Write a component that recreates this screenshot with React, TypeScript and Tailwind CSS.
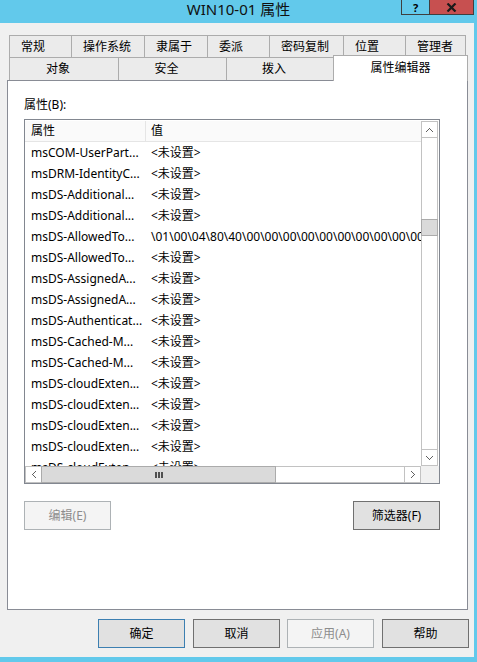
import React from "react";

const font = "font-['Noto_Sans','Noto_Sans_CJK_SC',sans-serif]";

const row1: [string, string][] = [
  ["常规", "w-[63px]"],
  ["操作系统", "w-[74px] -ml-px"],
  ["隶属于", "w-[64px] -ml-px"],
  ["委派", "w-[63px] -ml-px"],
  ["密码复制", "w-[75px] -ml-px"],
  ["位置", "w-[63px] -ml-px"],
  ["管理者", "w-[61px] -ml-px"],
];

const row2: [string, string][] = [
  ["对象", "w-[110px]"],
  ["安全", "w-[109px] -ml-px"],
  ["拨入", "w-[108px] -ml-px"],
];

const NS = "<未设置>";
const HEX = "\\01\\00\\04\\80\\40\\00\\00\\00\\00\\00\\00\\00\\00\\00\\00\\00";

const rows: [string, string][] = [
  ["msCOM-UserPart...", NS],
  ["msDRM-IdentityC...", NS],
  ["msDS-Additional...", NS],
  ["msDS-Additional...", NS],
  ["msDS-AllowedTo...", HEX],
  ["msDS-AllowedTo...", NS],
  ["msDS-AssignedA...", NS],
  ["msDS-AssignedA...", NS],
  ["msDS-Authenticat...", NS],
  ["msDS-Cached-M...", NS],
  ["msDS-Cached-M...", NS],
  ["msDS-cloudExten...", NS],
  ["msDS-cloudExten...", NS],
  ["msDS-cloudExten...", NS],
  ["msDS-cloudExten...", NS],
  ["msDS-cloudExten...", NS],
];

function ChevUp() {
  return (
    <svg width="7" height="4" viewBox="0 0 7 4" shapeRendering="crispEdges">
      <path d="M0 3h1v1H0zM1 2h1v1H1zM2 1h1v1H2zM3 0h1v1H3zM4 1h1v1H4zM5 2h1v1H5zM6 3h1v1H6z" fill="#606060" />
    </svg>
  );
}
function ChevDown() {
  return (
    <svg width="7" height="4" viewBox="0 0 7 4" shapeRendering="crispEdges">
      <path d="M0 0h1v1H0zM1 1h1v1H1zM2 2h1v1H2zM3 3h1v1H3zM4 2h1v1H4zM5 1h1v1H5zM6 0h1v1H6z" fill="#606060" />
    </svg>
  );
}
function ChevLeft() {
  return (
    <svg width="4" height="7" viewBox="0 0 4 7" shapeRendering="crispEdges">
      <path d="M3 0h1v1H3zM2 1h1v1H2zM1 2h1v1H1zM0 3h1v1H0zM1 4h1v1H1zM2 5h1v1H2zM3 6h1v1H3z" fill="#606060" />
    </svg>
  );
}
function ChevRight() {
  return (
    <svg width="4" height="7" viewBox="0 0 4 7" shapeRendering="crispEdges">
      <path d="M0 0h1v1H0zM1 1h1v1H1zM2 2h1v1H2zM3 3h1v1H3zM2 4h1v1H2zM1 5h1v1H1zM0 6h1v1H0z" fill="#606060" />
    </svg>
  );
}

function Btn({ label, cls }: { label: string; cls: string }) {
  return (
    <div className={`h-[29px] w-[87px] border flex items-center justify-center text-[12px] leading-[16px] ${cls}`}>
      {label}
    </div>
  );
}

export default function App() {
  return (
    <div className={`w-[477px] h-[662px] bg-[#62c9eb] flex flex-col overflow-hidden ${font} text-black`}>
      {/* Title bar */}
      <div className="h-[23px] grid grid-cols-[1fr_auto_1fr]">
        <div />
        <div className="h-[19px] leading-[19px] text-[15px] text-[#101010]">WIN10-01 属性</div>
        <div className="flex justify-end pr-[3px]">
          <div className="flex h-[15px] border-l border-r border-b border-[#3f3f3f]">
            <div className="w-[28px] flex items-center justify-center text-[11px] font-bold leading-[13px] border-r border-[#3f3f3f]">?</div>
            <div className="w-[43px] bg-[#c75050] flex items-center justify-center">
              <svg width="11" height="9" viewBox="0 0 11 9">
                <path d="M1.5 0.5 L9.5 8.5 M9.5 0.5 L1.5 8.5" stroke="#1a1a1a" strokeWidth="2.2" />
              </svg>
            </div>
          </div>
        </div>
      </div>

      {/* Client */}
      <div className="w-[474px] h-[634px] bg-[#f0f0f0] flex flex-col">
        {/* Tabs */}
        <div className="ml-[9px] mt-[12px] flex h-[22px]">
          {row1.map(([t, w]) => (
            <div key={t} className={`${w} h-full border-t border-l border-r border-[#acacac] bg-[#ebebeb] flex items-center pl-[11px] text-[12px] leading-[16px]`}>
              {t}
            </div>
          ))}
        </div>
        <div className="ml-[9px] flex items-end h-[23px]">
          {row2.map(([t, w]) => (
            <div key={t} className={`${w} h-[23px] border-t border-l border-r border-[#acacac] bg-[#ebebeb] flex items-center justify-center pr-[12px] text-[12px] leading-[16px]`}>
              {t}
            </div>
          ))}
          <div className="relative z-10 w-[135px] -ml-px h-[26px] -mb-px border-t border-l border-r border-[#acacac] bg-white flex items-center justify-center pb-[2px] text-[12px] leading-[16px]">
            属性编辑器
          </div>
        </div>

        {/* Panel */}
        <div className="ml-[7px] w-[461px] h-[530px] border border-[#898c95] bg-white pl-[16px] flex flex-col">
          <div className="mt-[16px] h-[16px] text-[12px] leading-[16px]">属性(B):</div>

          {/* List */}
          <div className="mt-[6px] w-[416px] h-[365px] border border-[#828790] bg-white flex flex-col">
            <div className="flex h-[346px] pt-px">
              <div className="flex-1 overflow-hidden flex flex-col">
                <div className="h-[21px] shrink-0 flex bg-[#fafafa] border-b border-[#e5e5e5] text-[12px] leading-[16px]">
                  <div className="w-[121px] border-r border-[#e5e5e5] pl-[6px] flex items-center">属性</div>
                  <div className="pl-[5px] flex items-center">值</div>
                </div>
                {rows.map(([a, b], i) => (
                  <div key={i} className="h-[21px] shrink-0 flex items-center text-[12px] leading-[16px] whitespace-nowrap">
                    <div className="w-[121px] shrink-0 pl-[6px] overflow-hidden">{a}</div>
                    <div className="pl-[5px] overflow-hidden">{b}</div>
                  </div>
                ))}
              </div>
              {/* vertical scrollbar */}
              <div className="w-[17px] flex flex-col">
                <div className="h-[17px] border border-[#c2c2c2] flex items-center justify-center">
                  <ChevUp />
                </div>
                <div className="flex-1 border-l border-r border-[#c2c2c2] flex flex-col">
                  <div className="mt-[81px] -mx-px h-[17px] border border-[#ababab] bg-[#dadada]" />
                </div>
                <div className="h-[17px] border border-[#c2c2c2] flex items-center justify-center">
                  <ChevDown />
                </div>
              </div>
              <div className="w-px" />
            </div>
            {/* horizontal scrollbar */}
            <div className="flex h-[17px]">
              <div className="flex-1 flex">
                <div className="w-[17px] border border-[#c2c2c2] flex items-center justify-center">
                  <ChevLeft />
                </div>
                <div className="w-[235px] -ml-px border border-[#ababab] bg-[#dadada] flex items-center justify-center">
                  <div className="flex gap-[1px]">
                    <div className="w-[2px] h-[6px] bg-[#505050]" />
                    <div className="w-[2px] h-[6px] bg-[#505050]" />
                    <div className="w-[2px] h-[6px] bg-[#505050]" />
                  </div>
                </div>
                <div className="flex-1 border-t border-b border-[#c2c2c2]" />
                <div className="w-[17px] border border-[#c2c2c2] flex items-center justify-center">
                  <ChevRight />
                </div>
              </div>
              <div className="w-[18px] bg-[#f0f0f0]" />
            </div>
          </div>

          <div className="mt-[17px] w-[416px] flex justify-between">
            <Btn label="编辑(E)" cls="bg-[#f4f4f4] border-[#adb2b5] text-[#8d8d8d]" />
            <Btn label="筛选器(F)" cls="bg-[#e1e1e1] border-[#707070]" />
          </div>
        </div>

        {/* Bottom buttons */}
        <div className="mt-[9px] flex justify-end pr-[5px]">
          <Btn label="确定" cls="bg-[#e1e1e1] border-[#3c7fb1]" />
          <div className="w-[8px]" />
          <Btn label="取消" cls="bg-[#e1e1e1] border-[#707070]" />
          <div className="w-[7px]" />
          <Btn label="应用(A)" cls="bg-[#f4f4f4] border-[#adb2b5] text-[#8d8d8d]" />
          <div className="w-[8px]" />
          <Btn label="帮助" cls="bg-[#e1e1e1] border-[#707070]" />
        </div>
      </div>
    </div>
  );
}
